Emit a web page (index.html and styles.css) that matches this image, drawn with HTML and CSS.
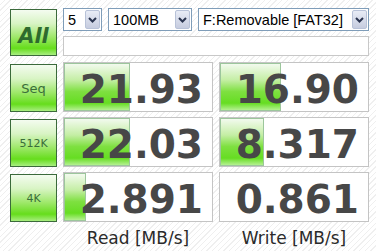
FILE: index.html
```html
<!DOCTYPE html>
<html lang="en">
<head>
    <meta charset="UTF-8">
    <meta name="viewport" content="width=device-width, initial-scale=1.0">
    <title>CrystalDiskMark</title>
    <link rel="stylesheet" href="styles.css">
</head>
<body>
    <div class="app">
        <div class="top">
            <button class="btn btn-all">All</button>
            <div class="settings">
                <div class="combos">
                    <div class="combo combo-count">
                        <span class="combo-text">5</span>
                        <span class="combo-arrow"><svg width="9" height="6" viewBox="0 0 9 6"><polyline points="1,1 4.5,4.5 8,1" fill="none" stroke="#2b3550" stroke-width="2"/></svg></span>
                    </div>
                    <div class="combo combo-size">
                        <span class="combo-text">100MB</span>
                        <span class="combo-arrow"><svg width="9" height="6" viewBox="0 0 9 6"><polyline points="1,1 4.5,4.5 8,1" fill="none" stroke="#2b3550" stroke-width="2"/></svg></span>
                    </div>
                    <div class="combo combo-drive">
                        <span class="combo-text">F:Removable [FAT32]</span>
                        <span class="combo-arrow"><svg width="9" height="6" viewBox="0 0 9 6"><polyline points="1,1 4.5,4.5 8,1" fill="none" stroke="#2b3550" stroke-width="2"/></svg></span>
                    </div>
                </div>
                <div class="status"></div>
            </div>
        </div>

        <div class="row">
            <button class="btn btn-test">Seq</button>
            <div class="cell"><span class="bar" style="width: 66px"></span><span class="value">21.93</span></div>
            <div class="cell"><span class="bar" style="width: 61px"></span><span class="value">16.90</span></div>
        </div>
        <div class="row">
            <button class="btn btn-test btn-small">512K</button>
            <div class="cell"><span class="bar" style="width: 66px"></span><span class="value">22.03</span></div>
            <div class="cell"><span class="bar" style="width: 44px"></span><span class="value">8.317</span></div>
        </div>
        <div class="row">
            <button class="btn btn-test btn-small">4K</button>
            <div class="cell"><span class="bar" style="width: 22px"></span><span class="value">2.891</span></div>
            <div class="cell"><span class="value">0.861</span></div>
        </div>

        <div class="labels">
            <span class="label">Read [MB/s]</span>
            <span class="label">Write [MB/s]</span>
        </div>
    </div>
</body>
</html>
```

FILE: styles.css
```css
body {
    margin: 0;
    padding: 0;
    width: 376px;
    height: 251px;
    overflow: hidden;
    font-family: 'DejaVu Sans', sans-serif;
    background-color: #ffffff;
    background-image: repeating-linear-gradient(135deg, #ffffff 0, #ffffff 3px, #efefef 3px, #efefef 4px);
}

.app {
    padding: 8px 0 0 10px;
    display: flex;
    flex-direction: column;
}

.top {
    display: flex;
    gap: 6px;
}

.btn {
    box-sizing: border-box;
    width: 47px;
    padding: 0;
    border: 1px solid #3b6a3b;
    background: linear-gradient(to bottom, #f4fcf0 0%, #d8f4c4 30%, #9ee86a 60%, #66dd1c 85%, #a8ee80 100%);
    color: #3a6e3a;
    font-family: 'DejaVu Sans', sans-serif;
    cursor: pointer;
}

.btn-all {
    height: 47px;
    margin-top: 1px;
    padding-top: 6px;
    font-size: 21px;
    font-weight: bold;
    font-style: italic;
    color: #2e6a2e;
}

.btn-test {
    height: 48px;
    font-size: 13px;
}

.btn-small {
    font-size: 11px;
}

.settings {
    width: 306px;
    display: flex;
    flex-direction: column;
    gap: 5px;
}

.combos {
    display: flex;
    gap: 6px;
}

.combo {
    box-sizing: border-box;
    height: 23px;
    border: 1px solid #7f9db9;
    background: #fff;
    display: flex;
    align-items: center;
    justify-content: space-between;
    padding: 0 1px 0 4px;
}

.combo-count { width: 39px; }
.combo-size { width: 84px; }
.combo-drive { width: 171px; }

.combo-text {
    font-family: 'Liberation Sans', sans-serif;
    font-size: 14.5px;
    color: #000;
    white-space: nowrap;
    overflow: hidden;
}

.combo-arrow {
    box-sizing: border-box;
    width: 15px;
    height: 19px;
    flex-shrink: 0;
    border: 1px solid #b8c2d8;
    border-radius: 2px;
    background: linear-gradient(to bottom, #e8ecf6, #c6ccdf);
    display: flex;
    align-items: center;
    justify-content: center;
}

.status {
    box-sizing: border-box;
    height: 20px;
    border: 1px solid #c8c8c8;
    background: #fff;
}

.row {
    display: flex;
    align-items: flex-end;
    gap: 6px;
    margin-top: 6px;
}

.row + .row {
    margin-top: 5px;
}

.cell {
    position: relative;
    box-sizing: border-box;
    width: 150px;
    height: 50px;
    border: 1px solid #c4c4c4;
    background: #fff;
    text-align: right;
    padding: 6px 9px 0 0;
}

.bar {
    position: absolute;
    left: 0;
    top: 0;
    bottom: 0;
    box-sizing: border-box;
    border: 1px solid #9cc69c;
    background: linear-gradient(to bottom, #f2faee 0%, #c4eea4 35%, #7ee040 60%, #66dd22 85%, #b4f090 100%);
}

.value {
    position: relative;
    font-family: 'DejaVu Sans', sans-serif;
    font-weight: bold;
    font-size: 39px;
    line-height: 42px;
    color: #474747;
}

.labels {
    display: flex;
    gap: 6px;
    margin-top: 6px;
    padding-left: 53px;
}

.label {
    width: 150px;
    text-align: center;
    font-size: 17px;
    line-height: 20px;
    color: #2a2a2a;
}
```
